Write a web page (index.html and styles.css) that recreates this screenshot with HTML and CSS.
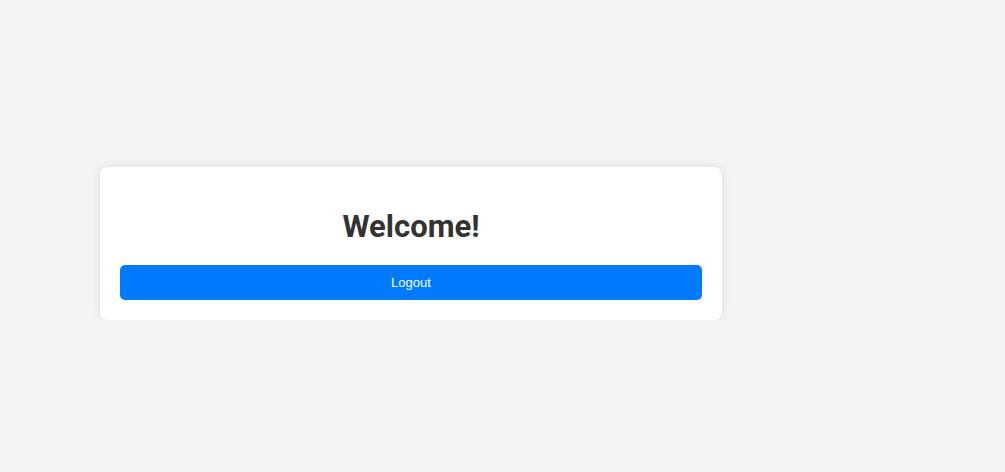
FILE: index.html
```html
<!DOCTYPE html>
<html>
<head>
<meta charset="utf-8">
<link rel="stylesheet" href="styles.css">
</head>
<body>
<div class="page">
  <div class="card">
    <h1 class="title">Welcome!</h1>
    <button class="logout">Logout</button>
  </div>
</div>
</body>
</html>
```
FILE: styles.css
```css
html, body {
  margin: 0;
  padding: 0;
  background: #f4f4f4;
}
.page {
  padding: 167px 0 0 100px;
}
.card {
  box-sizing: border-box;
  width: 622px;
  padding: 20px;
  background: #fff;
  border-radius: 8px;
  box-shadow: 0 0 10px rgba(0, 0, 0, 0.1);
  display: flex;
  flex-direction: column;
}
.title {
  margin: 21px 0 20px;
  font-family: Roboto, "Liberation Sans", sans-serif;
  font-size: 31px;
  line-height: 37px;
  font-weight: 700;
  color: #333;
  text-align: center;
}
.logout {
  width: 100%;
  padding: 10px;
  border: none;
  border-radius: 5px;
  background: #007bff;
  color: #fff;
  font-family: "Liberation Sans", Arial, sans-serif;
  font-size: 13px;
  line-height: 15.33px;
  cursor: pointer;
}
```
